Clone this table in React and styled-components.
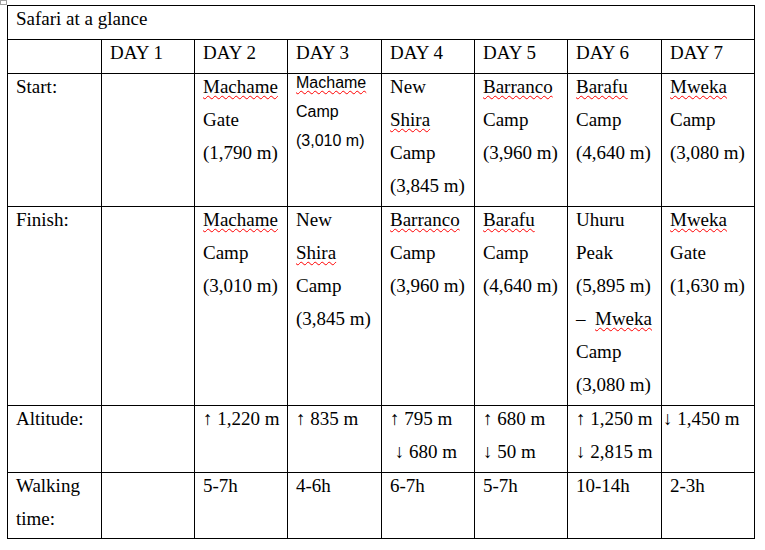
import React from "react";
import styled, { createGlobalStyle, css } from "styled-components";

const GlobalStyle = createGlobalStyle`
  html, body { margin: 0; padding: 0; background: #ffffff; }
  body { font-family: "Liberation Serif", "Times New Roman", serif; color: #000; }
`;

const Page = styled.div`
  padding: 5px 0 0 7px;
`;

const TableFrame = styled.div`
  position: relative;
  width: max-content;
`;

const TableGrid = styled.div`
  display: grid;
  grid-template-columns: 94px 93px 93px 94px 93px 93px 94px 93px;
  border-top: 1px solid #000;
  border-left: 1px solid #000;
`;

const Cell = styled.div`
  border-right: 1px solid #000;
  border-bottom: 1px solid #000;
  padding: 0 4px ${(p) => (p.$last ? 3 : 4)}px 8px;
  font-family: "Liberation Serif", "Times New Roman", serif;
  font-size: 19px;
  line-height: 33px;
  white-space: nowrap;
  min-width: 0;
  ${(p) =>
    p.$span &&
    css`
      grid-column: 1 / -1;
    `}
`;

const Lines = styled.div`
  margin-top: -4px;
  ${(p) =>
    p.$sans &&
    css`
      margin-top: -6px;
      font-family: "Liberation Sans", Arial, sans-serif;
      font-size: 16px;
      line-height: 29px;
    `}
`;

const Line = styled.div`
  margin-left: ${(p) => p.$shift || 0}px;
`;

const Misspelled = styled.span`
  text-decoration-line: underline;
  text-decoration-style: wavy;
  text-decoration-color: #ff0000;
  text-decoration-thickness: 1px;
  text-underline-offset: 2px;
`;

const MoveHandle = styled.div`
  position: absolute;
  left: -7px;
  top: -5px;
  width: 5px;
  height: 3px;
  border: 1px solid #a0a0a0;
  background: #ffffff;
`;

const ResizeHandle = styled.div`
  position: absolute;
  right: -8px;
  bottom: -8px;
  width: 5px;
  height: 5px;
  border: 1px solid #b4b4b4;
  background: #ffffff;
`;

const M = ({ children }) => <Misspelled>{children}</Misspelled>;

const rows = [
  {
    label: ["Start:"],
    days: [
      null,
      { lines: [<M>Machame</M>, "Gate", "(1,790 m)"] },
      { sans: true, lines: [<M>Machame</M>, "Camp", "(3,010 m)"] },
      { lines: ["New", <M>Shira</M>, "Camp", "(3,845 m)"] },
      { lines: [<M>Barranco</M>, "Camp", "(3,960 m)"] },
      { lines: [<M>Barafu</M>, "Camp", "(4,640 m)"] },
      { lines: [<M>Mweka</M>, "Camp", "(3,080 m)"] },
    ],
  },
  {
    label: ["Finish:"],
    days: [
      null,
      { lines: [<M>Machame</M>, "Camp", "(3,010 m)"] },
      { lines: ["New", <M>Shira</M>, "Camp", "(3,845 m)"] },
      { lines: [<M>Barranco</M>, "Camp", "(3,960 m)"] },
      { lines: [<M>Barafu</M>, "Camp", "(4,640 m)"] },
      {
        lines: [
          "Uhuru",
          "Peak",
          "(5,895 m)",
          <>
            {"\u2013\u00a0\u00a0"}
            <M>Mweka</M>
          </>,
          "Camp",
          "(3,080 m)",
        ],
      },
      { lines: [<M>Mweka</M>, "Gate", "(1,630 m)"] },
    ],
  },
  {
    label: ["Altitude:"],
    days: [
      null,
      { lines: ["\u2191 1,220 m"] },
      { lines: ["\u2191 835 m"] },
      { lines: ["\u2191 795 m", "\u00a0\u2193 680 m"] },
      { lines: ["\u2191 680 m", "\u2193 50 m"] },
      { lines: ["\u2191 1,250 m", "\u2193 2,815 m"] },
      { lines: ["\u2193 1,450 m"], shift: -7 },
    ],
  },
  {
    label: ["Walking", "time:"],
    last: true,
    days: [
      null,
      { lines: ["5-7h"] },
      { lines: ["4-6h"] },
      { lines: ["6-7h"] },
      { lines: ["5-7h"] },
      { lines: ["10-14h"] },
      { lines: ["2-3h"] },
    ],
  },
];

const days = ["DAY 1", "DAY 2", "DAY 3", "DAY 4", "DAY 5", "DAY 6", "DAY 7"];

export default function App() {
  return (
    <>
      <GlobalStyle />
      <Page>
        <TableFrame>
          <MoveHandle />
          <TableGrid>
            <Cell $span>
              <Lines>
                <Line>Safari at a glance</Line>
              </Lines>
            </Cell>
            <Cell />
            {days.map((d) => (
              <Cell key={d}>
                <Lines>
                  <Line>{d}</Line>
                </Lines>
              </Cell>
            ))}
            {rows.map((row, ri) => (
              <React.Fragment key={ri}>
                <Cell $last={row.last}>
                  <Lines>
                    {row.label.map((l, i) => (
                      <Line key={i}>{l}</Line>
                    ))}
                  </Lines>
                </Cell>
                {row.days.map((d, di) => (
                  <Cell key={di} $last={row.last}>
                    {d && (
                      <Lines $sans={d.sans}>
                        {d.lines.map((l, i) => (
                          <Line key={i} $shift={d.shift}>
                            {l}
                          </Line>
                        ))}
                      </Lines>
                    )}
                  </Cell>
                ))}
              </React.Fragment>
            ))}
          </TableGrid>
          <ResizeHandle />
        </TableFrame>
      </Page>
    </>
  );
}
